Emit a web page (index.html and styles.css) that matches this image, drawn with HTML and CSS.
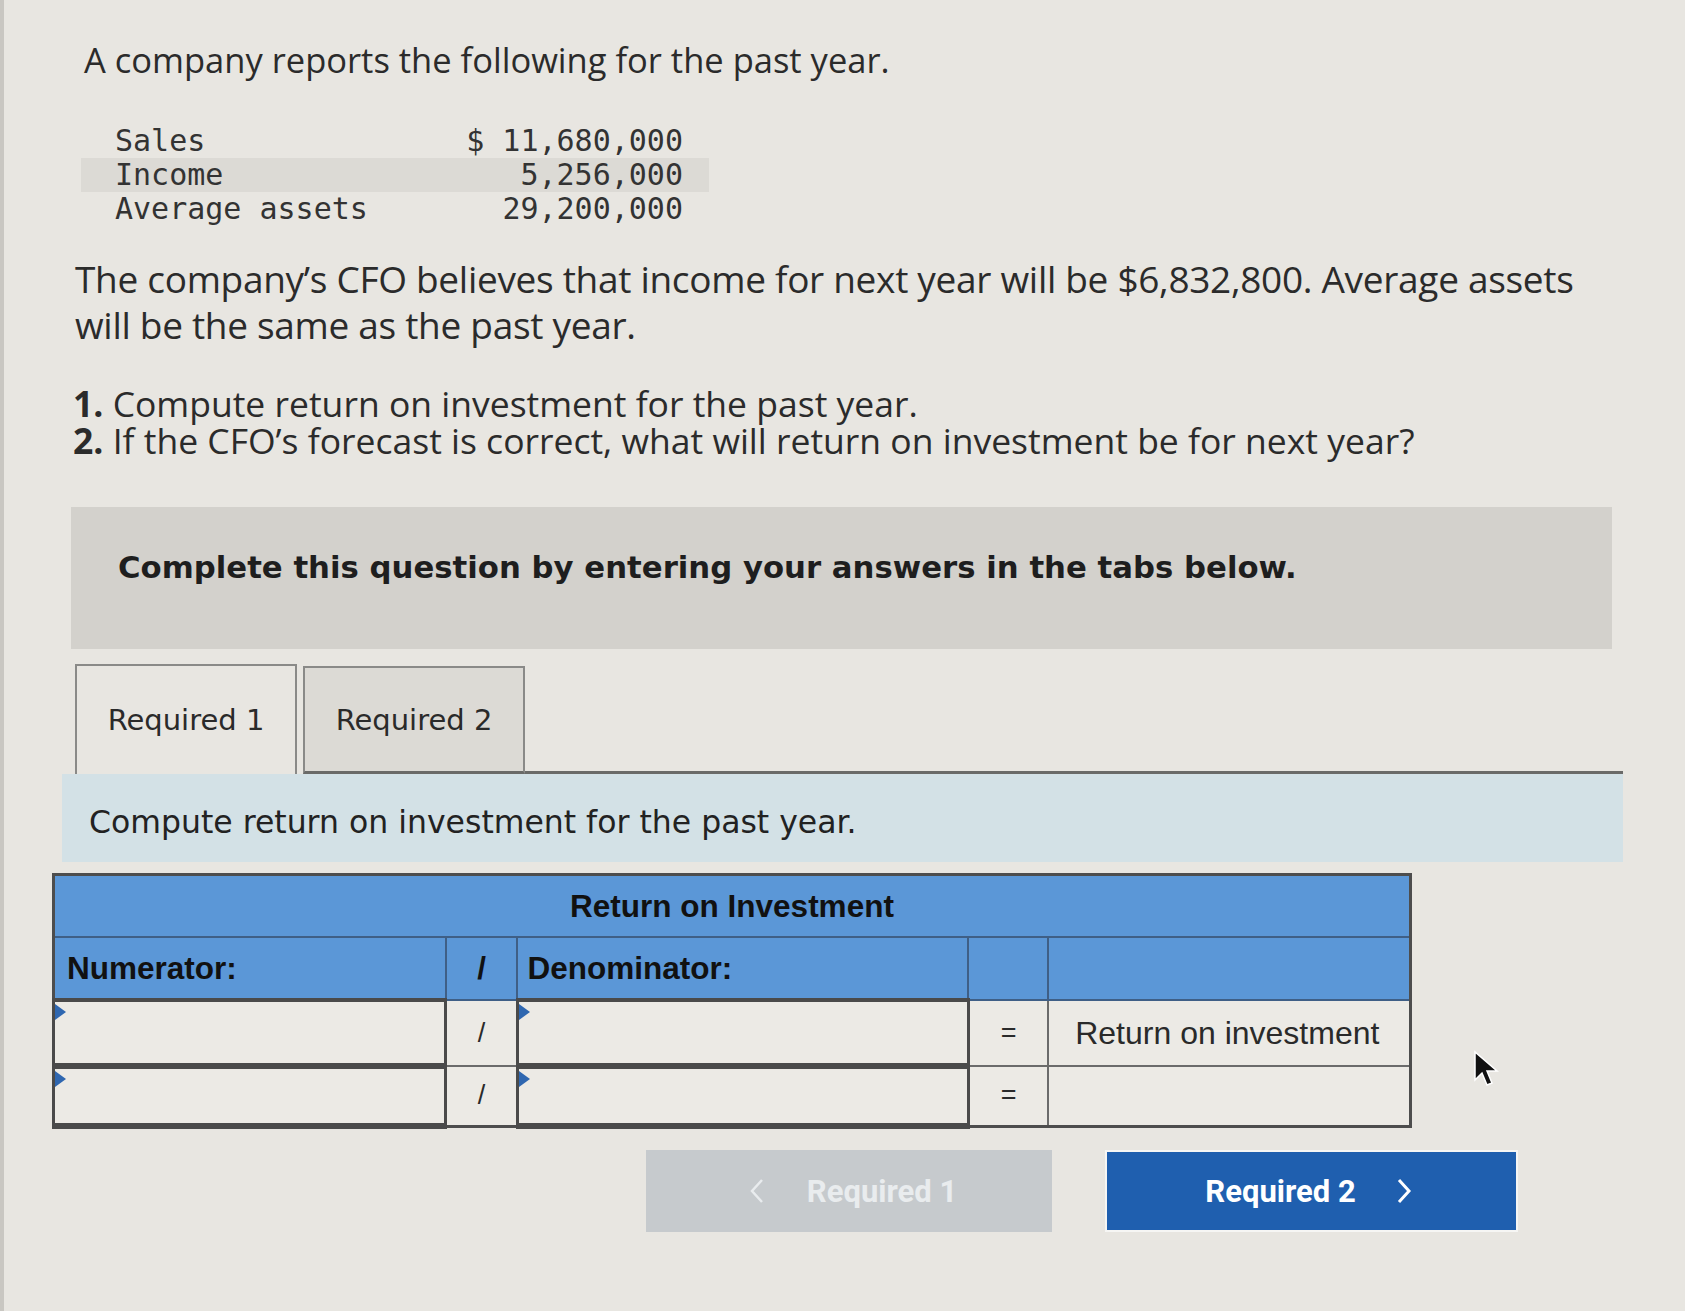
FILE: index.html
```html
<!DOCTYPE html>
<html>
<head>
<meta charset="utf-8">
<link rel="stylesheet" href="styles.css">
</head>
<body>
<div class="page">
  <h1 class="title">A company reports the following for the past year.</h1>
  <div class="data">
    <div class="drow"><span class="dlabel">Sales</span><span class="dval">$ 11,680,000</span></div>
    <div class="drow shade"><span class="dlabel">Income</span><span class="dval">5,256,000</span></div>
    <div class="drow"><span class="dlabel">Average assets</span><span class="dval">29,200,000</span></div>
  </div>
  <p class="para">The company’s CFO believes that income for next year will be $6,832,800. Average assets will be the same as the past year.</p>
  <ol class="list">
    <li><span class="num">1.</span> Compute return on investment for the past year.</li>
    <li><span class="num">2.</span> If the CFO’s forecast is correct, what will return on investment be for next year?</li>
  </ol>
  <div class="notice">Complete this question by entering your answers in the tabs below.</div>
  <div class="tabs">
    <div class="tab active">Required 1</div>
    <div class="tab">Required 2</div>
    <div class="tabfill"></div>
  </div>
  <div class="panel">Compute return on investment for the past year.</div>
  <table class="roi">
    <colgroup>
      <col class="c1"><col class="c2"><col class="c3"><col class="c4"><col class="c5">
    </colgroup>
    <tr class="h1"><th colspan="5">Return on Investment</th></tr>
    <tr class="h2">
      <th class="left">Numerator:</th>
      <th class="mid">/</th>
      <th class="left den">Denominator:</th>
      <th></th>
      <th></th>
    </tr>
    <tr class="r1">
      <td class="inp"><span class="flag"></span></td>
      <td class="op">/</td>
      <td class="inp"><span class="flag"></span></td>
      <td class="op">=</td>
      <td class="res">Return on investment</td>
    </tr>
    <tr class="r2">
      <td class="inp"><span class="flag"></span></td>
      <td class="op">/</td>
      <td class="inp"><span class="flag"></span></td>
      <td class="op">=</td>
      <td class="res"></td>
    </tr>
  </table>
  <div class="nav">
    <div class="btn prev">
      <svg class="chev" width="16" height="28" viewBox="0 0 16 28"><polyline points="13,3 3,14 13,25" fill="none" stroke="currentColor" stroke-width="2.5"/></svg>
      <span>Required 1</span>
    </div>
    <div class="btn next">
      <span>Required 2</span>
      <svg class="chev" width="16" height="28" viewBox="0 0 16 28"><polyline points="3,3 13,14 3,25" fill="none" stroke="currentColor" stroke-width="3"/></svg>
    </div>
  </div>
  <svg class="cursor" width="30" height="40" viewBox="0 0 30 40"><path d="M3 2 L3 30 L10 23 L15 35 L20 33 L15 21 L25 21 Z" fill="#111" stroke="#fff" stroke-width="1.5"/></svg>
</div>
</body>
</html>
```
FILE: styles.css
```css
html, body {
  margin: 0;
  padding: 0;
}
body {
  background: #e8e6e1;
  color: #2a2a2a;
  font-family: "Open Sans", Lato, sans-serif;
  border-left: 4px solid #c9c7c2;
  min-height: 1311px;
  box-sizing: border-box;
}
.page {
  position: relative;
  padding: 36px 0 0 58px;
  width: 1570px;
}
.title {
  margin: 0 0 0 22px;
  font-size: 34.5px;
  line-height: 48px;
  font-weight: 400;
  color: #2b2b2b;
}
.data {
  margin: 40px 0 0 19px;
  font-family: "DejaVu Sans Mono", monospace;
  font-size: 30px;
  color: #333;
}
.drow {
  display: grid;
  grid-template-columns: 346px 222px;
  width: 568px;
  padding: 0 26px 0 34px;
  height: 34px;
  line-height: 34px;
  white-space: nowrap;
}
.drow.shade {
  background: #dcdad5;
}
.dval {
  text-align: right;
}
.para {
  margin: 30px 0 0 13px;
  width: 1530px;
  font-size: 37px;
  line-height: 46px;
  letter-spacing: -0.3px;
  color: #2b2b2b;
}
.list {
  list-style: none;
  margin: 37px 0 0 11px;
  padding: 0;
  font-size: 35.5px;
  line-height: 37px;
  color: #2b2b2b;
}
.num {
  font-weight: 700;
}
.notice {
  margin: 48px 0 0 9px;
  width: 1494px;
  height: 100px;
  padding: 42px 0 0 47px;
  background: #d3d1cc;
  font-family: "DejaVu Sans", Verdana, sans-serif;
  font-weight: 700;
  font-size: 30.75px;
  line-height: 36px;
  color: #1e1e1e;
}
.tabs {
  display: flex;
  align-items: flex-end;
  margin: 15px 0 0 13px;
  width: 1548px;
  height: 110px;
  font-family: "DejaVu Sans", Verdana, sans-serif;
  font-size: 29px;
  color: #2a2a2a;
}
.tab {
  box-sizing: border-box;
  width: 222px;
  height: 108px;
  display: flex;
  align-items: center;
  justify-content: center;
  border: 2px solid #8a8a88;
  background: #dcdad5;
}
.tab.active {
  background: #e8e6e1;
  border-bottom: none;
  height: 110px;
}
.tab + .tab {
  margin-left: 6px;
  border-bottom: 3px solid #6a6a68;
}
.tabfill {
  flex: 1;
  border-bottom: 3px solid #6a6a68;
}
.panel {
  height: 58px;
  padding: 30px 0 0 27px;
  width: 1534px;
  background: #d3e1e6;
  font-family: "DejaVu Sans", Verdana, sans-serif;
  font-size: 31.5px;
  line-height: 36px;
  color: #222;
}
.roi {
  margin: 11px 0 0 -10px;
  border-collapse: collapse;
  width: 1360px;
  font-family: "Liberation Sans", Arial, sans-serif;
  border: 3px solid #4d4d4d;
}
.c1 { width: 393px; }
.c2 { width: 72px; }
.c3 { width: 452px; }
.c4 { width: 80px; }
.c5 { width: 363px; }
.roi th {
  background: #5b97d7;
  color: #111;
  font-weight: 700;
  font-size: 31.5px;
  border: 2px solid #3f5f86;
  padding: 0;
}
.h1 th {
  height: 60px;
  text-align: center;
}
.h2 th {
  height: 60px;
}
.roi th.left {
  text-align: left;
  padding-left: 12px;
}
.roi th.den {
  padding-left: 9px;
}
.roi th.mid {
  text-align: center;
}
.roi td {
  background: #eceae5;
  border: 2px solid #6b6b6b;
  font-size: 32px;
  color: #2a2a2a;
  padding: 0;
}
.r1 td { height: 61px; }
.r2 td { height: 54px; }
.roi td.inp {
  position: relative;
  border-bottom: 6px solid #4a4a4a;
  border-left: 3px solid #4a4a4a;
  border-right: 3px solid #4a4a4a;
}
.r1 td.inp {
  border-top: 4px solid #4a4a4a;
}
.flag {
  position: absolute;
  left: 0;
  top: 2px;
  width: 0;
  height: 0;
  border-top: 8px solid transparent;
  border-bottom: 8px solid transparent;
  border-left: 11px solid #2f67b0;
}
.roi td.op {
  text-align: center;
  font-size: 27px;
}
.roi td.res {
  padding-left: 26px;
}
.nav {
  display: flex;
  gap: 53px;
  margin: 21px 0 0 584px;
}
.btn {
  box-sizing: border-box;
  height: 82px;
  display: flex;
  align-items: center;
  justify-content: center;
  font-family: Roboto, "Liberation Sans", sans-serif;
  font-weight: 700;
  font-size: 31px;
}
.btn.prev {
  width: 406px;
  background: #c6cacd;
  color: #e9ecee;
  gap: 42px;
  padding-left: 8px;
}
.btn.next {
  width: 413px;
  background: #1f5faf;
  color: #ffffff;
  border: 2px solid #f6f6f4;
  gap: 40px;
  padding-right: 6px;
}
.cursor {
  position: absolute;
  left: 1468px;
  top: 1050px;
}
```
